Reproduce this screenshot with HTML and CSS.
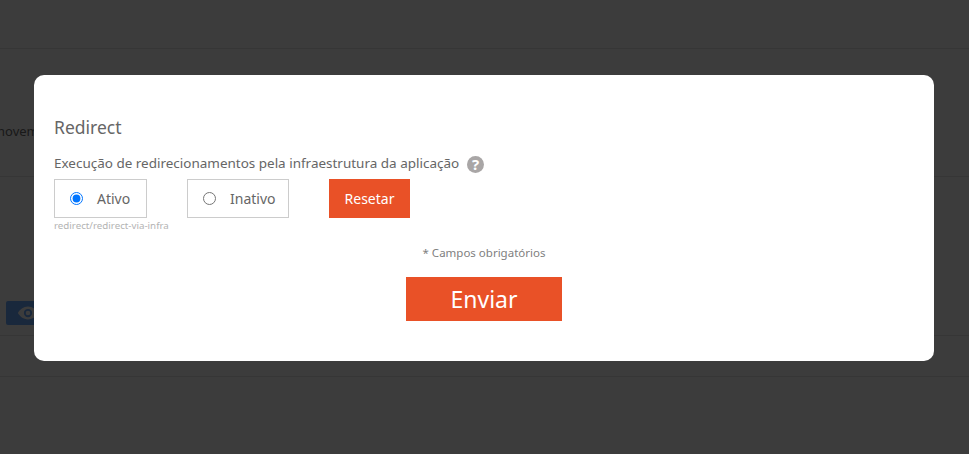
FILE: index.html
```html
<!DOCTYPE html>
<html lang="pt-BR">
<head>
<meta charset="utf-8">
<title>Redirect</title>
<link rel="stylesheet" href="styles.css">
</head>
<body>
<div class="page">
  <div class="row row-top"></div>
  <div class="row row-text"><span class="clip-text">novembro</span></div>
  <div class="row row-action">
    <span class="eye-btn">
      <svg class="eye-icon" viewBox="0 0 24 24" width="22" height="22"><path d="M12 5C7 5 3 8.500 1 12c2 3.500 6 7 11 7s9-3.500 11-7c-2-3.500-6-7-11-7zm0 11.500a4.500 4.500 0 1 1 0-9 4.500 4.500 0 0 1 0 9zm0-7a2.500 2.500 0 1 0 0 5 2.500 2.500 0 0 0 0-5z"/></svg>
    </span>
  </div>
  <div class="row row-last"></div>
</div>
<div class="overlay"></div>
<form class="modal">
  <h2 class="title">Redirect</h2>
  <div class="label-line">
    <span class="label">Execução de redirecionamentos pela infraestrutura da aplicação</span>
    <span class="help">?</span>
  </div>
  <div class="options">
    <label class="option option-on"><input type="radio" name="via" checked><span>Ativo</span></label>
    <label class="option option-off"><input type="radio" name="via"><span>Inativo</span></label>
    <button type="button" class="reset">Resetar</button>
  </div>
  <div class="hint">redirect/redirect-via-infra</div>
  <div class="required">* Campos obrigatórios</div>
  <div class="submit-line"><button type="button" class="submit">Enviar</button></div>
</form>
</body>
</html>
```
FILE: styles.css
```css
* { box-sizing: border-box; }
html, body { margin: 0; height: 100%; }
body {
  background: #fff;
  font-family: "Noto Sans", sans-serif;
  overflow: hidden;
}
.page { height: 454px; overflow: hidden; }
.row { border-bottom: 1px solid #e6e6e6; }
.row-top { height: 49px; }
.row-text { height: 128px; padding-top: 73px; }
.row-action { height: 159px; padding: 124px 0 0 6px; }
.row-last { height: 41px; }
.clip-text {
  display: block;
  margin-left: -3px;
  font-size: 13px;
  line-height: 18px;
  color: #6a6a6a;
  white-space: nowrap;
}
.eye-btn {
  display: flex;
  align-items: center;
  width: 60px;
  height: 24px;
  padding-left: 11px;
  background: #6aa8ff;
  border-radius: 2px;
}
.eye-icon { fill: #fff; }
.overlay {
  position: fixed;
  inset: 0;
  background: rgba(0, 0, 0, 0.765);
}
.modal {
  position: fixed;
  left: 34px;
  top: 75px;
  width: 900px;
  height: 286px;
  padding: 40px 20px 0;
  background: #fff;
  border-radius: 10px;
  color: #666;
}
.title {
  margin: 0;
  font-size: 17.5px;
  line-height: 24px;
  font-weight: 400;
  color: #666;
}
.label-line {
  display: flex;
  align-items: center;
  gap: 8px;
  height: 22px;
  margin-top: 13px;
}
.label { font-size: 13.47px; line-height: 20px; white-space: nowrap; color: #666; }
.help {
  display: flex;
  align-items: center;
  justify-content: center;
  width: 17px;
  height: 17px;
  margin-top: 3px;
  border-radius: 50%;
  background: #a9a6a6;
  color: #fff;
  font-size: 15px;
  font-weight: 700;
  line-height: 1;
}
.options { display: flex; height: 39px; margin-top: 5px; }
.option {
  display: flex;
  align-items: center;
  height: 39px;
  border: 1px solid #ccc;
  font-size: 14px;
  color: #666;
}
.option input { width: 13px; height: 13px; margin: 0; accent-color: #0075ff; }
.option-on { width: 93px; padding-left: 15px; gap: 14px; }
.option-off { width: 102px; margin-left: 40px; padding-left: 15px; gap: 14px; }
.reset {
  width: 81px;
  height: 39px;
  margin-left: 40px;
  border: 0;
  padding: 0;
  background: #e95127;
  color: #fff;
  font-family: inherit;
  font-size: 14px;
}
.hint { margin-top: 1px; font-size: 9.75px; line-height: 14px; color: #b3b3b3; }
.required {
  margin-top: 12px;
  text-align: center;
  font-size: 11.5px;
  line-height: 16px;
  color: #808080;
}
.submit-line { display: flex; justify-content: center; margin-top: 16px; }
.submit {
  width: 156px;
  height: 44px;
  border: 0;
  padding: 0;
  background: #e95127;
  color: #fff;
  font-family: inherit;
  font-size: 23px;
}
```
